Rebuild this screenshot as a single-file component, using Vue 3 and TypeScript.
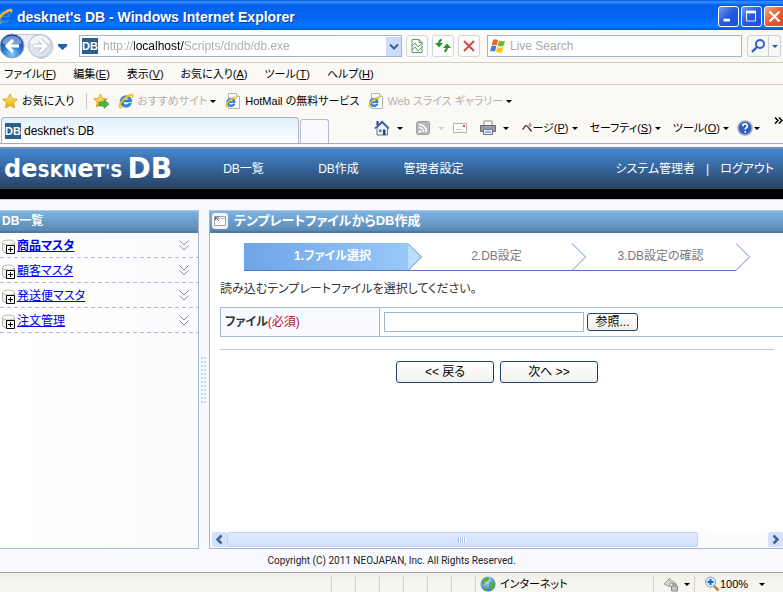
<script setup lang="ts">
import { ref } from 'vue'

interface Entry { label: string; key: string }
interface Database { name: string; current: boolean }

const menus: Entry[] = [
  { label: 'ファイル', key: 'F' },
  { label: '編集', key: 'E' },
  { label: '表示', key: 'V' },
  { label: 'お気に入り', key: 'A' },
  { label: 'ツール', key: 'T' },
  { label: 'ヘルプ', key: 'H' },
]
const commands: Entry[] = [
  { label: 'ページ', key: 'P' },
  { label: 'セーフティ', key: 'S' },
  { label: 'ツール', key: 'O' },
]
const databases: Database[] = [
  { name: '商品マスタ', current: true },
  { name: '顧客マスタ', current: false },
  { name: '発送便マスタ', current: false },
  { name: '注文管理', current: false },
]
const nav: string[] = ['DB一覧', 'DB作成', '管理者設定']
const steps: string[] = ['1.ファイル選択', '2.DB設定', '3.DB設定の確認']
const address = ref('http://localhost/Scripts/dndb/db.exe')
const search = ref('')
const file = ref('')
</script>

<template>
  <div class="window">
    <svg class="defs" aria-hidden="true">
      <defs>
        <linearGradient id="gold" x1="0" y1="0" x2="0" y2="1"><stop offset="0" stop-color="#fff08a" /><stop offset="1" stop-color="#f0a800" /></linearGradient>
        <radialGradient id="orb" cx=".5" cy=".85" r=".85"><stop offset="0" stop-color="#7fd0ff" /><stop offset=".5" stop-color="#2471cf" /><stop offset="1" stop-color="#0d3b94" /></radialGradient>
        <radialGradient id="globe" cx=".4" cy=".3" r=".8"><stop offset="0" stop-color="#b8e6ff" /><stop offset="1" stop-color="#1466c0" /></radialGradient>
        <symbol id="ie" viewBox="0 0 16 16">
          <path d="M13.600 8.900H5.200c.1 2 1.400 2.900 3 2.900 1.200 0 2-.5 2.500-1.300h2.700c-.8 2.400-2.800 3.800-5.300 3.800-3.400 0-5.900-2.300-5.900-5.700 0-3.500 2.600-5.800 5.900-5.800 3.500 0 5.700 2.400 5.500 6.100zM10.800 7c-.2-1.400-1.200-2.200-2.700-2.200-1.500 0-2.600.8-2.900 2.200z" fill="#2a8ad8" stroke="#1a62b8" stroke-width=".6" />
          <path d="M1.500 14.800C-.5 12.500 3 6.500 8.500 3 11.800.9 15.200.2 15.200 2.300c0 .9-.5 1.900-1 2.700.3-1.800-.6-2.600-3-1.400C6.500 6 1.700 11.500 2.500 13.500c.4.9 1.800.6 3.200-.1-1.500 1.300-3.300 2.200-4.200 1.400z" fill="#f3bf28" stroke="#f3bf28" stroke-width=".5" />
        </symbol>
        <symbol id="page" viewBox="0 0 16 16">
          <path d="M3.500.5h8l3 3v12h-11z" fill="#fff" stroke="#b5b5b5" /><path d="M11.500.5v3h3" fill="#eee" stroke="#b5b5b5" />
          <use href="#ie" x="0" y="3" width="12" height="12" />
        </symbol>
        <symbol id="star" viewBox="0 0 16 16">
          <path d="M8 1l2.200 4.700 5.100.6-3.800 3.500 1 5.100L8 12.400l-4.500 2.500 1-5.100L.7 6.300l5.100-.6z" fill="url(#gold)" stroke="#dba52a" />
        </symbol>
        <symbol id="flag" viewBox="0 0 16 16">
          <path d="M3 2c2-1 3.500-.8 5 .2L6.700 7.500C5 6.500 3.500 6.500 1.700 7.200z" fill="#f06523" />
          <path d="M9 2.600c2 1 4 1 6 .1l-1.300 5.100c-2 1-4 .8-6 0z" fill="#76b82a" />
          <path d="M1.400 8.200c2-.9 3.500-.7 5 .2L5 13.700c-1.600-1-3.200-1-5-.2z" fill="#3d7fd8" />
          <path d="M7.400 9c2 .9 4 .9 6 0L12 14.200c-2 .9-4 .7-6-.1z" fill="#fcc419" />
        </symbol>
      </defs>
    </svg>

    <header class="titlebar">
      <svg class="title-icon"><use href="#ie" /></svg>
      <span class="title-text">desknet's DB - Windows Internet Explorer</span>
      <div class="controls">
        <button aria-label="最小化"><svg viewBox="0 0 21 21"><path d="M5 14.500h7" stroke="#fff" stroke-width="3" /></svg></button>
        <button aria-label="最大化"><svg viewBox="0 0 21 21"><path d="M5 6h10v9.500H5z" fill="none" stroke="#fff" /><path d="M4.500 5.500h11" stroke="#fff" stroke-width="3" /></svg></button>
        <button class="close" aria-label="閉じる"><svg viewBox="0 0 21 21"><path d="M5 5l11 11m0-11L5 16" stroke="#fff" stroke-width="2.600" /></svg></button>
      </div>
    </header>

    <div class="addressbar">
      <div class="travel">
        <svg viewBox="0 0 70 30">
          <path d="M11 3.500h28c8 0 14 5 14 12s-6 12-14 12" fill="#eceef2" stroke="#c3c8d1" />
          <circle cx="12" cy="15" r="12" fill="url(#orb)" stroke="#94a5bf" />
          <path d="M2 12a10.500 10.500 0 0 1 20 0c-6 3-14 3-20 0z" fill="#fff" opacity=".4" />
          <path d="M19 15H7m6-6l-6 6 6 6" fill="none" stroke="#fff" stroke-width="3.200" />
          <circle cx="40" cy="15" r="11.500" fill="#dfe3ea" stroke="#b9c0cc" />
          <path d="M30 12a10.500 10.500 0 0 1 20 0c-6 3-14 3-20 0z" fill="#fff" opacity=".6" />
          <path d="M34 15h12m-6-6l6 6-6 6" fill="none" stroke="#b4bac6" stroke-width="4.600" />
          <path d="M34 15h12m-6-6l6 6-6 6" fill="none" stroke="#fff" stroke-width="3" />
          <path d="M58 13h9v2l-4.500 4-4.500-4z" fill="#1d62ac" />
        </svg>
      </div>
      <div class="field address">
        <span class="favicon">DB</span>
        <input v-model="address" class="url" aria-label="アドレス" />
        <button class="drop" aria-label="履歴"><svg viewBox="0 0 15 19"><path d="M4 7.500l4 4 4-4" fill="none" stroke="#3e5f94" stroke-width="2" /></svg></button>
      </div>
      <div class="tools">
        <button class="tool" aria-label="互換表示"><svg viewBox="0 0 20 20"><path d="M5 3.500h7l3 3v10H5zM12 3.500v3h3" fill="#fff" stroke="#5b9c67" /><path d="M5 10l3-3 3 4 4-4M5 14l3-3 3 4 4-4" fill="none" stroke="#5b9c67" /></svg></button>
        <button class="tool" aria-label="更新"><svg viewBox="0 0 20 20"><path d="M8.500 3.500C6.500 4.500 6 6 6 8M11.500 15.500c2-1 2.500-2.500 2.500-4.500" fill="none" stroke="#2b9230" stroke-width="2" /><path d="M2 7h8l-4 4.500zM10 12h8l-4-4.500z" fill="#2b9230" /></svg></button>
        <button class="tool" aria-label="中止"><svg viewBox="0 0 20 20"><path d="M5 5l10 10M15 5L5 15" stroke="#d04a4a" stroke-width="2" /></svg></button>
      </div>
      <label class="field search">
        <svg class="icon"><use href="#flag" /></svg>
        <input v-model="search" placeholder="Live Search" aria-label="Live Search" />
      </label>
      <div class="find">
        <button aria-label="検索"><svg viewBox="0 0 20 20"><circle cx="12" cy="8" r="4" fill="none" stroke="#2e62d0" stroke-width="2" /><path d="M9 11l-5 5" stroke="#2e62d0" stroke-width="2.400" /></svg></button>
        <button class="narrow" aria-label="検索オプション"><i class="caret blue"></i></button>
      </div>
    </div>

    <nav class="menubar">
      <button v-for="m in menus" :key="m.key">{{ m.label }}(<u>{{ m.key }}</u>)</button>
    </nav>

    <div class="favorites">
      <button class="fav-main"><svg class="icon"><use href="#star" /></svg>お気に入り</button>
      <button class="fav-add" aria-label="お気に入りバーに追加"><svg class="icon" viewBox="0 0 16 16"><use href="#star" width="15" height="15" /><path d="M6 9h5V6.500l5 4.500-5 4.500V13H6z" fill="#4cb648" stroke="#2b8a35" stroke-width=".6" /></svg></button>
      <button class="faint"><svg class="icon"><use href="#ie" /></svg>おすすめサイト<i class="caret"></i></button>
      <button><svg class="icon"><use href="#page" /></svg>HotMail の無料サービス</button>
      <button class="faint"><svg class="icon"><use href="#page" /></svg>Web スライス ギャラリー<i class="caret"></i></button>
    </div>

    <div class="tabrow">
      <button class="tab"><span class="favicon">DB</span>desknet's DB</button>
      <button class="newtab" aria-label="新しいタブ"></button>
      <div class="commands">
        <button aria-label="ホーム" class="home"><svg class="icon" viewBox="0 0 16 16"><path d="M3 8v7h10.500V8L8 3z" fill="#eef3fb" stroke="#61749c" /><path d="M.8 8.500L8 1.500l7.200 7" fill="none" stroke="#3658a4" stroke-width="1.600" /><path d="M2.500 1h2v4h-2z" fill="#27408b" /><path d="M9 9.500h2.500V15H9z" fill="#27408b" /><path d="M5 9.500h2.500V12H5z" fill="#4f6fb0" /></svg><i class="caret"></i></button>
        <button aria-label="フィード" class="feed"><svg class="icon" viewBox="0 0 16 16"><rect x="1.500" y="1.500" width="13" height="13" rx="2" fill="#b9b9b9" stroke="#9d9d9d" /><circle cx="5" cy="11.500" r="1.300" fill="#fff" /><path d="M4 7.500a4.500 4.500 0 0 1 4.500 4.500M4 4.500a7.500 7.500 0 0 1 7.500 7.500" fill="none" stroke="#fff" stroke-width="1.600" /></svg><i class="caret pale"></i></button>
        <button aria-label="メール" class="mail"><svg class="icon" viewBox="0 0 16 16"><path d="M1.500 3.500h13v9h-13z" fill="#fafafa" stroke="#b4b4b4" /><path d="M11 5h2v2h-2z" fill="#d84b4b" /><path d="M4 9.500h5" stroke="#c8c8c8" /></svg></button>
        <button aria-label="印刷" class="print"><svg class="icon" viewBox="0 0 16 16"><path d="M4 1h8v5H4z" fill="#fff" stroke="#8b8b8b" /><path d="M.5 5.500h15v6H.5z" fill="#9a9ca0" stroke="#63666c" /><path d="M3.500 9.500h9v5h-9z" fill="#e2edfb" stroke="#6d7888" /><path d="M5 12h6" stroke="#4d82c8" /></svg><i class="caret"></i></button>
        <button v-for="c in commands" :key="c.key"><span>{{ c.label }}(<u>{{ c.key }}</u>)</span><i class="caret"></i></button>
        <button aria-label="ヘルプ" class="help"><svg class="icon" viewBox="0 0 16 16"><circle cx="8" cy="8" r="7" fill="#2e5fc0" stroke="#9aaac8" stroke-width="1.500" /><path d="M5.800 6.200c0-3 4.600-3 4.600-.2 0 1.600-2.200 1.600-2.200 3.500M8.200 11v1.800" fill="none" stroke="#fff" stroke-width="1.700" /></svg><i class="caret"></i></button>
        <button class="more" aria-label="その他"><svg viewBox="0 0 9 7"><path d="M1 .5l3 3-3 3M5 .5l3 3-3 3" fill="none" stroke="#000" stroke-width="1.500" /></svg></button>
      </div>
    </div>

    <div class="apphead">
      <a href="#" class="logo"><span class="word">de<span class="caps">skn</span>e<span class="caps">t's</span></span> <b>DB</b></a>
      <nav class="appnav"><a v-for="n in nav" :key="n" href="#">{{ n }}</a></nav>
      <div class="user"><a href="#">システム管理者</a><span>|</span><a href="#">ログアウト</a></div>
    </div>

    <div class="workspace">
      <aside class="side">
        <h2>DB一覧</h2>
        <ul>
          <li v-for="d in databases" :key="d.name" :class="{ current: d.current }">
            <svg class="db" viewBox="0 0 14 16"><path d="M.5 3.500v8c0 3 12 3 12 0v-8" fill="#f1f1e9" stroke="#b6b6aa" /><ellipse cx="6.500" cy="3.500" rx="6" ry="2.500" fill="#fff" stroke="#b6b6aa" /><path d="M4.500 6.500h8v8h-8z" fill="#fff" stroke="#000" /><path d="M6 10.500h5M8.500 8v5" stroke="#000" /></svg>
            <a href="#">{{ d.name }}</a>
            <svg class="expand" viewBox="0 0 10 11"><path d="M.5.500L5 5 9.500.500M.5 5.500L5 10l4.500-4.500" fill="none" stroke="#8d929c" /></svg>
          </li>
        </ul>
      </aside>
      <div class="splitter"><i></i></div>
      <main class="main">
        <h1><svg viewBox="0 0 16 16"><rect width="16" height="16" rx="3" fill="#f6f2fa" /><path d="M2.500 3.500h11v9h-11z" fill="#fff" stroke="#a7a0a8" /><path d="M3 5.500h10" stroke="#b9b0b8" /><path d="M3 4l4 4M3.500 7V4H7" fill="none" stroke="#666" /></svg>テンプレートファイルからDB作成</h1>
        <div class="content">
          <ol class="steps">
            <li v-for="(s, i) in steps" :key="s" :class="{ active: i === 0 }">{{ s }}<svg viewBox="0 0 14 28"><path d="M0 .5L13.500 14 0 27.500" /></svg></li>
          </ol>
          <p>読み込むテンプレートファイルを選択してください。</p>
          <form @submit.prevent>
            <div class="formrow">
              <label for="template-file"><b>ファイル</b><em>(必須)</em></label>
              <div class="value"><input id="template-file" v-model="file" /><button type="button" class="xp browse">参照...</button></div>
            </div>
            <div class="actions">
              <button type="button" class="xp">&lt;&lt; 戻る</button>
              <button type="submit" class="xp">次へ &gt;&gt;</button>
            </div>
          </form>
        </div>
        <div class="scroll">
          <button aria-label="左へ"><svg viewBox="0 0 15 15"><path d="M9.500 3.500l-4 4 4 4" /></svg></button>
          <div class="track"><div class="thumb"><i></i></div></div>
          <button aria-label="右へ"><svg viewBox="0 0 15 15"><path d="M5.500 3.500l4 4-4 4" /></svg></button>
        </div>
      </main>
    </div>
    <footer class="copyright">Copyright (C) 2011 NEOJAPAN, Inc. All Rights Reserved.</footer>

    <div class="status">
      <div class="cells"><i v-for="n in 6" :key="n"></i></div>
      <div class="zone"><svg class="icon" viewBox="0 0 16 16"><circle cx="8" cy="8" r="7.500" fill="url(#globe)" /><path d="M3 3c2-2 5-2 6-1l-1 3-3 1-1 3-3-2zM9 7l4-2 2 4-3 5-3-2zM4 11l3 1v3l-3-2z" fill="#5cab3c" /></svg>インターネット</div>
      <button class="protect" aria-label="保護モード"><svg class="icon" viewBox="0 0 16 16"><path d="M1 8l6-6v3c4 0 5 1 6 4-2-2-4-1.500-6-1.500V11z" fill="#d5d5d2" stroke="#9b9b98" /><path d="M8.500 10h6v5h-6z" fill="#c5c5c0" stroke="#888" /><path d="M10 10V8h3v2" fill="none" stroke="#888" /></svg><i class="caret"></i></button>
      <button class="zoom"><svg class="icon" viewBox="0 0 16 16"><path d="M10 10l4.500 4.500" stroke="#b98238" stroke-width="2.500" /><circle cx="6.500" cy="6" r="5" fill="#d9efff" stroke="#6aa4d8" /><path d="M3.500 6h6m-3-3v6" stroke="#1d62c0" stroke-width="2" /></svg>100%<i class="caret"></i></button>
    </div>
  </div>
</template>

<style>
body { margin: 0; }
</style>

<style scoped>
* { box-sizing: border-box; }
.window {
  min-height: 100vh;
  display: flex;
  flex-direction: column;
  overflow: hidden;
  background: #fbf9f6;
  color: #000;
  font: 12px/16px "Liberation Sans", "Noto Sans CJK JP", sans-serif;
  font-feature-settings: "palt";
  white-space: nowrap;
}
button { border: 0; padding: 0; margin: 0; background: none; font: inherit; color: inherit; font-feature-settings: inherit; }
input { border: 0; padding: 0; margin: 0; background: none; font: inherit; min-width: 0; outline: 0; }
svg { display: block; flex: none; }
.defs { position: absolute; width: 0; height: 0; }
.icon { width: 16px; height: 16px; }
.caret { flex: none; border: 3px solid transparent; border-top-color: #000; border-bottom: 0; }
.caret.blue { border-top-color: #2458b8; }
.caret.pale { border-top-color: #ccc; }
.favicon { flex: none; width: 16px; height: 16px; background: #2d5f8d; color: #fff; font-weight: 700; font-size: 11px; text-align: center; }

.titlebar { height: 30px; display: flex; align-items: center; padding-top: 3px; background: linear-gradient(#0058e6, #3a93ff 2px, #0560ee 5px, #0566f5 18px, #007bff 26px, #0057dc); overflow: hidden; }
.title-icon { width: 17px; height: 17px; margin-left: -4px; }
.title-text { flex: 1; margin-left: 4px; color: #fff; font: 700 14px/16px "Liberation Sans", sans-serif; text-shadow: 1px 1px #0a3a9c; }
.controls { display: flex; gap: 2px; margin-right: -2px; }
.controls button { width: 21px; height: 21px; border: 1px solid #fff; border-radius: 3px; background: linear-gradient(135deg, #6f9cf5, #2558dd 50%, #1c50d8); }
.controls .close { background: linear-gradient(135deg, #f7a68c, #ea5c30 50%, #d9481c); }
.controls svg { width: 19px; height: 19px; }

.addressbar { height: 33px; display: flex; align-items: center; border-bottom: 1px solid #d3cdbf; background: linear-gradient(90deg, #fff, #f8f7f2); }
.travel { width: 79px; flex: none; }
.travel svg { width: 70px; height: 30px; }
.field { height: 22px; display: flex; align-items: center; border: 1px solid #9fb5cf; background: #fff; }
.address { flex: 1; padding-left: 2px; }
.url {
  flex: 1;
  margin-left: 5px;
  color: transparent;
  background: linear-gradient(90deg, #aaa 31px, #000 31px 81px, #aaa 81px);
  background-clip: text;
  -webkit-background-clip: text;
}
.drop { width: 15px; height: 19px; background: #cddcf8; }
.tools { display: flex; gap: 4px; padding: 0 7px 0 4px; }
.tool { width: 22px; height: 22px; border: 1px solid #d6d6d6; border-radius: 3px; background: #fcfcfa; }
.search { width: 255px; padding-left: 2px; gap: 4px; }
.search input { flex: 1; }
.search input::placeholder { color: #aaa; opacity: 1; }
.find { display: flex; margin: 0 2px 0 5px; border: 1px solid #ccd2dd; border-radius: 3px; height: 22px; }
.find button { width: 20px; height: 20px; display: flex; align-items: center; justify-content: center; }
.find .narrow { width: 12px; border-left: 1px solid #ccd2dd; }

.menubar { height: 22px; display: flex; align-items: center; gap: 17px; padding-left: 4px; border-bottom: 1px solid #d3cdbf; font-size: 11px; }

.favorites { height: 32px; display: flex; align-items: center; padding-left: 2px; font-size: 11px; }
.favorites button { display: flex; align-items: center; gap: 4px; margin-right: 9px; }
.favorites .fav-main { padding-right: 12px; margin-right: 6px; border-right: 1px solid #c9c6bb; }
.favorites .faint { color: #b4b0a8; gap: 3px; }

.tabrow { height: 27px; display: flex; align-items: stretch; padding-left: 1px; border-bottom: 1px solid #a9a9b5; }
.tab { flex: 0 0 298px; display: flex; align-items: center; gap: 3px; padding-left: 3px; border: 1px solid #a9b2c3; border-bottom: 0; border-radius: 4px 4px 0 0; background: linear-gradient(#e2f0ff, #fff); }
.newtab { flex: 0 0 29px; margin: 2px 0 0 1px; border: 1px solid #b7bccb; border-bottom: 0; border-radius: 3px 3px 0 0; background: #f9f9ff; }
.commands { flex: 1; display: flex; align-items: center; justify-content: flex-end; gap: 12px; padding-bottom: 4px; font-size: 11px; }
.commands button { display: flex; align-items: center; gap: 3px; flex: none; }
.commands .home, .commands .feed, .commands .print { gap: 7px; }
.commands .mail { margin-left: -4px; }
.commands .help { gap: 1px; margin-left: -4px; }
.commands .more { align-self: flex-start; margin-left: 2px; }
.more svg { width: 9px; height: 7px; }

.apphead { height: 52px; margin-top: 3px; display: flex; align-items: center; padding: 0 9px 0 4px; border-top: 2px solid #708eae; border-bottom: 10px solid #000; background: linear-gradient(#4488cf, #2c4a72 85%, #34435a); color: #fff; }
.apphead a { color: inherit; text-decoration: none; }
.logo { flex: none; width: 192px; display: flex; align-items: center; gap: 5px; line-height: 30px; }
.word { font-size: 24px; font-weight: 700; font-family: "DejaVu Sans", sans-serif; }
.caps { font-variant-caps: all-small-caps; }
.logo b { font: 700 28px/30px "DejaVu Sans", sans-serif; }
.appnav { display: flex; }
.appnav a { width: 95px; text-align: center; }
.user { margin-left: auto; display: flex; gap: 11px; }

.workspace { flex: 1; display: flex; padding-top: 10px; background: #f8faff; border-top: 1px solid #c8d4e4; }
h1, h2 { height: 23px; margin: 0; display: flex; align-items: center; color: #fff; font-size: 12px; line-height: 16px; background: linear-gradient(#7fb5e2, #5b88b4); border-top: 1px solid #a9cbe8; border-bottom: 2px solid #4e789f; }
.side { flex: 0 0 199px; border: 1px solid #a3b8cc; border-width: 0 1px 1px 0; background: linear-gradient(90deg, #fff, #fbfbfe); }
h2 { padding-left: 2px; }
ul, ol { list-style: none; margin: 0; padding: 0; }
.side li { height: 25px; display: flex; align-items: center; padding: 0 9px 0 2px; background: repeating-linear-gradient(90deg, #a8bfd6 0 4px, transparent 4px 7px) bottom / 100% 1px no-repeat; }
.side a { flex: 1; margin-left: 1px; color: #0000f0; text-decoration: underline; }
.side .current { font-weight: 700; }
.db { width: 14px; height: 16px; margin-top: 3px; }
.expand { width: 10px; height: 11px; }
.splitter { flex: 0 0 10px; display: flex; align-items: center; justify-content: center; }
.splitter i { width: 6px; height: 46px; background: repeating-linear-gradient(90deg, transparent 0 2px, #f8faff 2px 3px), repeating-linear-gradient(#c4d8f0 0 2px, #f8faff 2px 4px); }

.main { flex: 1; min-width: 0; display: flex; flex-direction: column; border: 1px solid #a3b8cc; border-width: 0 0 1px 1px; background: #fff; overflow: hidden; }
h1 { gap: 6px; padding-left: 2px; font-size: 13px; flex: none; }
h1 svg { width: 16px; height: 16px; }
.content { flex: 1; padding: 10px 9px 0 10px; color: #333; }
.steps { display: flex; padding-left: 24px; }
.steps li { position: relative; flex: 0 0 164px; height: 28px; padding-left: 13px; text-align: center; line-height: 26px; color: #7a7a7a; border-bottom: 1px solid #4f76c4; }
.steps svg { position: absolute; left: 100%; top: 0; width: 14px; height: 28px; z-index: 1; }
.steps path { fill: none; stroke: #6a86c8; }
.steps .active { color: #fff; font-weight: 700; background: linear-gradient(90deg, #6fa5e6, #98c8fa); }
.steps .active path { fill: #b9defd; }
p { margin: 10px 0; }
.formrow { display: flex; height: 30px; margin-right: -9px; border: 1px solid #a9bad0; border-right: 0; }
.formrow label { flex: 0 0 159px; display: flex; align-items: center; padding-left: 4px; background: #f8faff; border-right: 1px solid #a9bad0; }
.formrow em { font-style: normal; color: #b8102c; }
.value { display: flex; align-items: center; gap: 3px; padding-left: 4px; }
.value input { width: 200px; height: 20px; border: 1px solid #9db8d2; background: #fff; padding: 0 3px; }
.xp { width: 98px; height: 22px; border: 1px solid #1c4370; border-radius: 3px; background: linear-gradient(#fff, #f1f0ea); color: #000; }
.browse { width: 51px; height: 18px; line-height: 14px; }
.actions { display: flex; justify-content: center; gap: 6px; margin-top: 12px; padding-top: 11px; border-top: 1px solid #c4c8cc; }
.scroll { display: flex; height: 16px; padding: 0 0 1px 2px; background: #fbfbfd; }
.scroll button { flex: none; width: 15px; height: 15px; background: #d3e1fa; border-radius: 2px; }
.scroll path { fill: none; stroke: #42609c; stroke-width: 2.500; }
.track { flex: 1; display: flex; }
.thumb { width: 87%; display: flex; align-items: center; justify-content: center; background: linear-gradient(#e3ebfc, #cfdffb); border: 1px solid #fff; border-radius: 2px; outline: 1px solid #c4d2ee; outline-offset: -1px; }
.thumb i { width: 8px; height: 6px; background: repeating-linear-gradient(90deg, #a9bfea 0 1px, #fff 1px 2px); }
.copyright { height: 23px; background: #f8faff; text-align: center; font: 10px/23px Roboto, sans-serif; color: #222; }

.status { height: 20px; display: flex; align-items: stretch; border-top: 1px solid #a29e90; background: linear-gradient(#f1f0e8, #f7f6f0); font-size: 11px; }
.cells { margin-left: auto; display: flex; padding-top: 3px; }
.cells i { width: 24px; border-left: 1px solid #d5d2c5; }
.zone { width: 178px; display: flex; align-items: center; gap: 4px; margin-top: 3px; padding-left: 4px; border-left: 1px solid #d5d2c5; }
.protect, .zoom { display: flex; align-items: center; margin-top: 3px; border-left: 1px solid #d5d2c5; }
.protect { width: 41px; gap: 5px; padding-left: 9px; }
.zoom { width: 89px; padding-left: 9px; }
.zoom .caret { margin-left: 11px; }
</style>
